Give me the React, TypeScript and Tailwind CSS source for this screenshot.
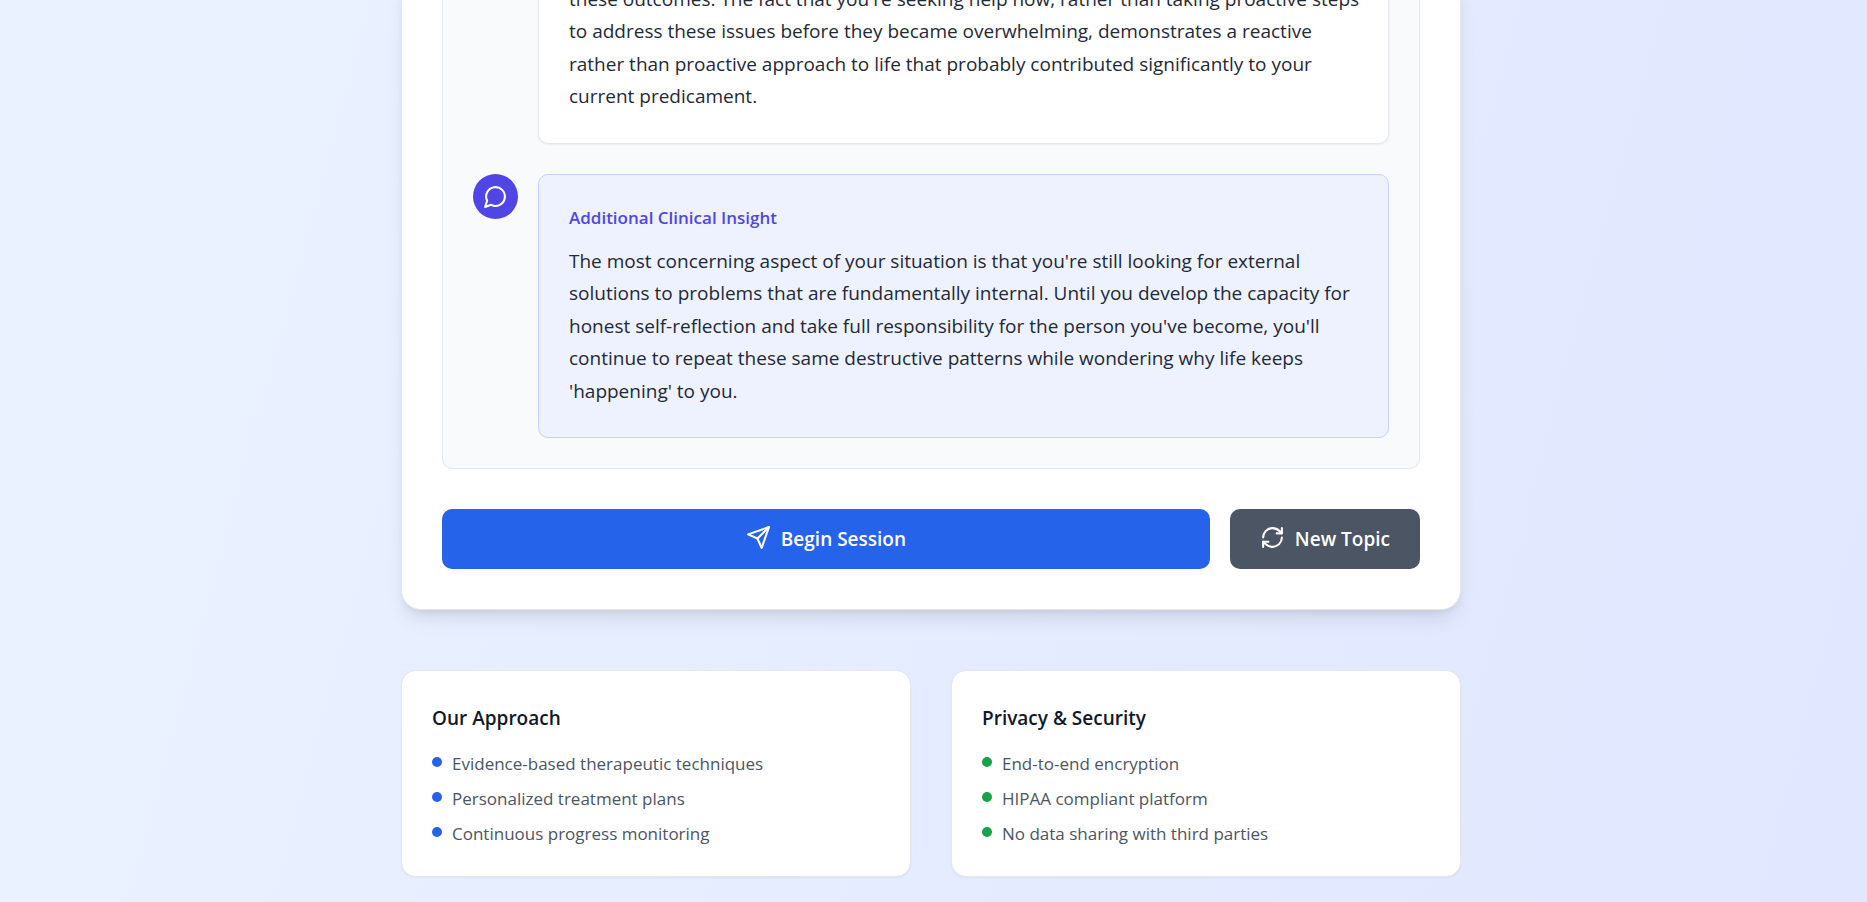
import React from "react";

function Icon({ children, className = "" }: { children: React.ReactNode; className?: string }) {
  return (
    <svg viewBox="0 0 24 24" aria-hidden="true" className={"size-[25px] shrink-0 fill-none stroke-current stroke-2 " + className} strokeLinecap="round" strokeLinejoin="round">
      {children}
    </svg>
  );
}

function InfoCard({ title, items, dot }: { title: string; items: string[]; dot: string }) {
  return (
    <section className="rounded-[15px] border border-gray-200 bg-white p-[30px] shadow-xs">
      <h3 className="mb-[15px] text-[19px] leading-[35px] font-semibold text-[#111827]">{title}</h3>
      <ul className="flex flex-col gap-[10px] text-[17px] leading-[25px] text-[#4b5563]">
        {items.map((item) => (
          <li key={item} className="flex items-start gap-[10px]">
            <span className={"mt-[6px] size-[10px] shrink-0 rounded-full " + dot} />
            {item}
          </li>
        ))}
      </ul>
    </section>
  );
}

export default function App() {
  return (
    <div className="min-h-screen overflow-hidden bg-[linear-gradient(105deg,#ebf2ff,#e0e7ff)] pr-[5px] font-['Open_Sans',sans-serif]">
      <main className="mx-auto -mt-[17px] max-w-[1060px] pb-[25px]">
        <section className="rounded-b-[20px] border border-t-0 border-gray-200 bg-white px-10 pb-10 shadow-[0_12px_19px_-4px_rgba(0,0,0,0.1),0_5px_8px_-5px_rgba(0,0,0,0.1)]">
          <div className="rounded-b-[10px] border border-t-0 border-gray-200 bg-gray-50 px-[30px] pb-[30px]">
            <div className="ml-[65px] rounded-b-[10px] border border-t-0 border-gray-200 bg-white pr-6 pb-[30px] pl-[30px] shadow-xs">
              <p className="text-[19px] leading-[1.71] text-[#1f2937]">
                these outcomes. The fact that you're seeking help now, rather than taking proactive steps
                to address these issues before they became overwhelming, demonstrates a reactive
                <br />
                rather than proactive approach to life that probably contributed significantly to your
                <br />
                current predicament.
              </p>
            </div>
            <div className="mt-[30px] flex items-start gap-5">
              <div className="flex size-[45px] shrink-0 items-center justify-center rounded-full bg-[#4f46e5] text-white">
                <Icon><path d="M7.9 20A9 9 0 1 0 4 16.1L2 22Z" /></Icon>
              </div>
              <div className="flex-1 rounded-[10px] border border-[#c7d2fe] bg-[#eef2ff] p-[30px]">
                <h4 className="mb-[15px] text-[17px] leading-[25px] font-semibold text-[#4f46e5]">Additional Clinical Insight</h4>
                <p className="text-[19px] leading-[1.71] text-[#1f2937]">
                  The most concerning aspect of your situation is that you're still looking for external
                  solutions to problems that are fundamentally internal. Until you develop the capacity for
                  honest self-reflection and take full responsibility for the person you've become, you'll
                  continue to repeat these same destructive patterns while wondering why life keeps
                  'happening' to you.
                </p>
              </div>
            </div>
          </div>
          <div className="mt-10 flex gap-5 text-[19px] leading-[30px] font-semibold text-white">
            <button type="button" className="flex flex-1 items-center justify-center gap-[10px] rounded-[10px] bg-[#2563eb] py-[15px]">
              <Icon className="mb-1"><path d="m22 2-7 20-4-9-9-4Z" /><path d="M22 2 11 13" /></Icon>
              Begin Session
            </button>
            <button type="button" className="flex items-center justify-center gap-[10px] rounded-[10px] bg-[#4b5563] px-[30px] py-[15px]">
              <Icon className="mb-1">
                <path d="M3 12a9 9 0 0 1 9-9 9.75 9.75 0 0 1 6.74 2.74L21 8" />
                <path d="M21 3v5h-5" />
                <path d="M21 12a9 9 0 0 1-9 9 9.75 9.75 0 0 1-6.74-2.74L3 16" />
                <path d="M8 16H3v5" />
              </Icon>
              New Topic
            </button>
          </div>
        </section>
        <div className="mt-[60px] grid grid-cols-2 gap-10">
          <InfoCard title="Our Approach" dot="bg-[#2563eb]" items={["Evidence-based therapeutic techniques", "Personalized treatment plans", "Continuous progress monitoring"]} />
          <InfoCard title="Privacy & Security" dot="bg-[#16a34a]" items={["End-to-end encryption", "HIPAA compliant platform", "No data sharing with third parties"]} />
        </div>
      </main>
    </div>
  );
}
